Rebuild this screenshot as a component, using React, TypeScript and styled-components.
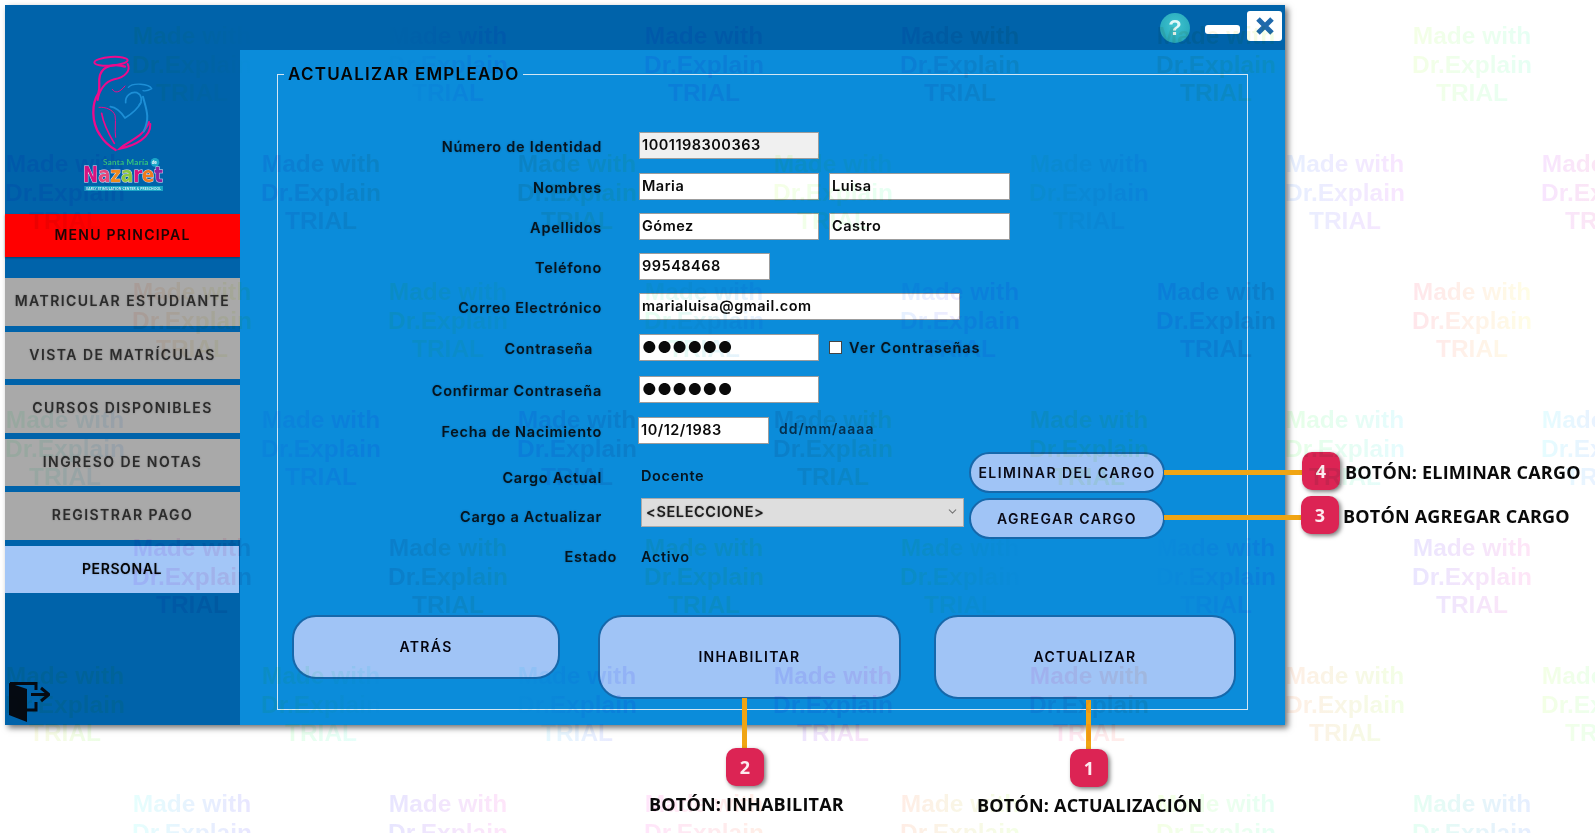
import React from 'react';
import styled, { createGlobalStyle } from 'styled-components';
import { ChevronDown } from 'lucide-react';

const GlobalStyle = createGlobalStyle`
  html, body {
    margin: 0;
    padding: 0;
    background: #fff;
  }
`;

const UI_FONT = `Inter, "Noto Sans", sans-serif`;

const Page = styled.div`
  position: relative;
  width: 1595px;
  height: 833px;
  padding: 5px 0 0 5px;
  box-sizing: border-box;
  overflow: hidden;
  font-family: ${UI_FONT};
  color: #0a0a0a;
`;

const Window = styled.div`
  width: 1280px;
  height: 720px;
  display: flex;
  flex-direction: column;
  background: #0063aa;
  box-shadow: 3px 3px 6px rgba(0, 0, 0, 0.55);
`;

const TitleBar = styled.div`
  height: 45px;
  flex: none;
  display: flex;
  align-items: flex-start;
  justify-content: flex-end;
  padding: 6px 3px 0 0;
  box-sizing: border-box;
`;

const HelpIcon = styled.div`
  width: 30px;
  height: 30px;
  margin-top: 2px;
  border-radius: 50%;
  background: radial-gradient(circle at 50% 40%, #3fc4cf, #1f9fb4);
  color: #dff8f8;
  font: 700 22px/30px "Liberation Sans", sans-serif;
  text-align: center;
`;

const MinimizeIcon = styled.div`
  width: 35px;
  height: 9px;
  margin: 14px 7px 0 15px;
  border-radius: 3px;
  background: #fff;
`;

const CloseIcon = styled.div`
  width: 35px;
  height: 30px;
  border-radius: 3px;
  background: #fff;
  display: flex;
  align-items: center;
  justify-content: center;
`;

const Body = styled.div`
  flex: 1;
  display: flex;
  min-height: 0;
`;

const Sidebar = styled.aside`
  width: 235px;
  flex: none;
  display: flex;
  flex-direction: column;
`;

const LogoBox = styled.div`
  height: 164px;
  flex: none;
  padding-left: 70px;
`;

const MainMenu = styled.div`
  height: 43px;
  flex: none;
  display: flex;
  align-items: center;
  justify-content: center;
  padding-bottom: 2px;
  box-sizing: border-box;
  background: #ff0000;
  box-shadow: 0 1px 2px rgba(0, 0, 0, 0.35);
  font-size: 14px;
  font-weight: 600;
  letter-spacing: 1.25px;
  color: #1d0505;
`;

const NavList = styled.nav`
  display: flex;
  flex-direction: column;
  gap: 6px;
  margin-top: 21px;
`;

const NavItem = styled.div<{ $active?: boolean }>`
  height: 47.5px;
  display: flex;
  align-items: center;
  justify-content: center;
  padding-bottom: 2px;
  box-sizing: border-box;
  background: ${(p) => (p.$active ? '#a3c6f7' : '#a9a9a9')};
  width: ${(p) => (p.$active ? '234px' : '235px')};
  color: ${(p) => (p.$active ? '#050505' : '#2c2c2c')};
  font-size: 14px;
  font-weight: 600;
  letter-spacing: ${(p) => (p.$active ? '0.6px' : '1.45px')};
  text-shadow: 0 0 2px rgba(0, 0, 0, 0.25);
`;

const ExitButton = styled.div`
  margin: auto 0 3px 3px;
  width: 42px;
  height: 40px;
`;

const Panel = styled.main`
  flex: 1;
  background: #0b8cda;
  padding: 13px 37px 15px 37px;
  display: flex;
`;

const GroupBox = styled.fieldset`
  flex: 1;
  min-width: 0;
  margin: 0;
  padding: 0;
  border: 1px solid #d3e6f3;
`;

const GroupTitle = styled.legend`
  margin-left: 6px;
  padding: 0 4px;
  font-size: 17px;
  line-height: 22px;
  font-weight: 600;
  letter-spacing: 1.25px;
  color: #050505;
`;

const FormArea = styled.div`
  display: flex;
  flex-direction: column;
  padding-top: 47px;
`;

const FormRow = styled.div<{ $gap: number; $height: number }>`
  display: grid;
  grid-template-columns: 339px 526px;
  column-gap: 22px;
  height: ${(p) => p.$height}px;
  margin-top: ${(p) => p.$gap}px;
  align-items: center;
`;

const FieldLabel = styled.label<{ $inset?: number; $drop?: number }>`
  justify-self: end;
  margin-right: ${(p) => p.$inset ?? 15}px;
  margin-top: ${(p) => p.$drop ?? 2}px;
  font-size: 14.5px;
  font-weight: 600;
  letter-spacing: 0.72px;
  white-space: nowrap;
  color: #06141f;
  text-shadow: 0 0 2px rgba(0, 0, 0, 0.25);
`;

const Fields = styled.div<{ $start?: boolean }>`
  display: flex;
  gap: ${(p) => (p.$start ? '5px' : '10px')};
  align-items: ${(p) => (p.$start ? 'flex-start' : 'center')};
  height: 100%;
`;

const TextInput = styled.input<{ $w: number; $disabled?: boolean; $dots?: boolean; $nudge?: number }>`
  width: ${(p) => p.$w}px;
  height: 27px;
  margin-left: ${(p) => p.$nudge ?? 0}px;
  box-sizing: border-box;
  border: 1px solid #9c9c9c;
  padding: 0 2px 2px;
  background: ${(p) => (p.$disabled ? '#f0f0f0' : '#fff')};
  font-family: ${UI_FONT};
  font-size: ${(p) => (p.$dots ? '16px' : '14.5px')};
  font-weight: 600;
  letter-spacing: 0.5px;
  color: #0a0a0a;
  outline: none;
`;

const ShowPassword = styled.label`
  display: flex;
  align-items: center;
  gap: 7px;
  font-size: 14.5px;
  font-weight: 600;
  letter-spacing: 0.98px;
  color: #06141f;
  text-shadow: 0 0 2px rgba(0, 0, 0, 0.25);
`;

const CheckBox = styled.input`
  appearance: none;
  width: 13px;
  height: 13px;
  margin: 0;
  background: #fff;
  border: 1px solid #444;
`;

const Hint = styled.span`
  margin: -4px 0 0 0;
  font-size: 14px;
  font-weight: 600;
  letter-spacing: 1px;
  color: #05304f;
`;

const StaticValue = styled.span<{ $drop?: number }>`
  padding-top: ${(p) => p.$drop ?? 1}px;
  margin-left: 2px;
  font-size: 14.5px;
  font-weight: 600;
  letter-spacing: 0.65px;
  color: #06141f;
`;

const FakeSelect = styled.div`
  width: 323px;
  height: 29px;
  margin-left: 2px;
  flex: none;
  box-sizing: border-box;
  display: flex;
  align-items: center;
  justify-content: space-between;
  padding: 0 4px 2px 4px;
  background: #dedede;
  border: 1px solid #aaa;
  font-size: 14.5px;
  font-weight: 600;
  letter-spacing: 0.62px;
  color: #1d1d1d;
  text-shadow: 0 0 2px rgba(0, 0, 0, 0.3);
`;

const PillButton = styled.button`
  width: 196px;
  height: 41px;
  margin-left: auto;
  flex: none;
  border: 2px solid #1668ab;
  border-radius: 21px;
  background: #a0c4f6;
  font-family: ${UI_FONT};
  font-size: 14px;
  font-weight: 600;
  letter-spacing: 1.45px;
  color: #0a0a16;
  padding: 0 0 1px;
`;

const BottomActions = styled.div`
  display: flex;
  align-items: flex-start;
  padding-left: 14px;
  margin-top: 46px;
`;

const ActionButton = styled.button<{ $w: number; $h: number; $offset?: number }>`
  width: ${(p) => p.$w}px;
  height: ${(p) => p.$h}px;
  margin-left: ${(p) => p.$offset ?? 0}px;
  flex: none;
  border: 2px solid #1668ab;
  border-radius: 24px;
  background: #a0c4f6;
  font-family: ${UI_FONT};
  font-size: 14px;
  font-weight: 600;
  letter-spacing: 1.35px;
  color: #050510;
  padding: 0 0 2px;
`;

/* Dr.Explain annotations and trial stamp sit on top of the captured window */
const Connector = styled.div<{ $x: number; $y: number; $w: number; $h: number }>`
  position: absolute;
  left: ${(p) => p.$x}px;
  top: ${(p) => p.$y}px;
  width: ${(p) => p.$w}px;
  height: ${(p) => p.$h}px;
  background: #f0a514;
`;

const Badge = styled.div<{ $x: number; $y: number }>`
  position: absolute;
  left: ${(p) => p.$x}px;
  top: ${(p) => p.$y}px;
  width: 38px;
  height: 38px;
  border-radius: 10px;
  background: #dc2454;
  box-shadow: 2px 2px 4px rgba(0, 0, 0, 0.5);
  color: #fdeaf0;
  font: 700 18px/38px "Open Sans", sans-serif;
  text-align: center;
`;

const CalloutText = styled.div<{ $x: number; $y: number }>`
  position: absolute;
  left: ${(p) => p.$x}px;
  top: ${(p) => p.$y}px;
  font: 700 18px/24px "Open Sans", sans-serif;
  letter-spacing: 0.2px;
  white-space: nowrap;
  color: #0a0a0a;
`;

const Stamp = styled.div<{ $x: number; $y: number; $hue: number }>`
  position: absolute;
  left: ${(p) => p.$x}px;
  top: ${(p) => p.$y}px;
  width: 122px;
  text-align: center;
  font: 700 24.5px/28.5px "Liberation Sans", Arial, sans-serif;
  white-space: nowrap;
  pointer-events: none;
  mix-blend-mode: multiply;
  color: transparent;
  background: linear-gradient(
    90deg,
    hsl(${(p) => p.$hue} 100% 95%),
    hsl(${(p) => p.$hue + 70} 100% 95%)
  );
  background-clip: text;
  -webkit-background-clip: text;
`;

const CALLOUTS = [
  { n: 1, x: 1070, y: 749, text: 'BOTÓN: ACTUALIZACIÓN', tx: 977, ty: 793 },
  { n: 2, x: 726, y: 748, text: 'BOTÓN: INHABILITAR', tx: 649, ty: 792 },
  { n: 3, x: 1301, y: 496, text: 'BOTÓN AGREGAR CARGO', tx: 1343, ty: 504 },
  { n: 4, x: 1302, y: 452, text: 'BOTÓN: ELIMINAR CARGO', tx: 1345, ty: 460 },
];

const LINES = [
  { x: 1086, y: 700, w: 5, h: 50 },
  { x: 742, y: 698, w: 5, h: 50 },
  { x: 1164, y: 515, w: 138, h: 5 },
  { x: 1164, y: 470, w: 139, h: 5 },
];

function buildStamps() {
  const stamps: { x: number; y: number; hue: number }[] = [];
  for (let row = 0; row < 7; row++) {
    const odd = row % 2 === 0;
    for (let col = 0; col < 7; col++) {
      const x = (odd ? 131 : 4) + col * 256;
      const y = 22 + row * 128;
      if (x < 1595) stamps.push({ x, y, hue: (col * 67 + row * 131 + 110) % 360 });
    }
  }
  return stamps;
}

function Logo() {
  return (
    <svg width="100" height="150" viewBox="0 0 300 450">
      <g fill="none" stroke="#ee0a8c" strokeLinecap="round">
        <ellipse cx="108" cy="34" rx="50" ry="13" strokeWidth="6" transform="rotate(-4 108 34)" />
        <path d="M150 50C120 40 85 45 75 75C68 100 78 110 70 130C50 160 48 215 75 255C90 280 105 290 122 300" strokeWidth="7" />
        <path d="M158 42C168 62 150 82 118 88C90 95 72 120 68 150" strokeWidth="6" />
        <path d="M112 118C120 130 132 130 150 108" strokeWidth="3" />
        <path d="M72 172C92 170 115 180 120 196C124 215 118 240 122 262" strokeWidth="3" />
        <path d="M80 190C85 220 100 250 118 280" strokeWidth="5" />
        <path d="M226 222C228 262 182 286 134 296C160 272 205 264 222 216" strokeWidth="6" />
      </g>
      <g fill="none" stroke="#1d8fd6" strokeLinecap="round">
        <path d="M160 112C172 98 222 100 230 116C220 122 212 124 204 122" strokeWidth="4" />
        <path d="M152 158C150 138 168 124 186 128C200 134 204 152 192 166" strokeWidth="5" />
        <path d="M106 170C122 172 138 186 150 204C170 192 186 180 198 158" strokeWidth="5" />
        <path d="M204 140C214 178 226 204 206 244" strokeWidth="6" />
      </g>
      <text x="84" y="344" fontFamily="Lato, sans-serif" fontSize="24" fontWeight="700" fill="#35c77c" textLength="136">
        Santa María
      </text>
      <circle cx="240" cy="337" r="13" fill="#1aa6c9" />
      <text x="230" y="342" fontFamily="Lato, sans-serif" fontSize="14" fontWeight="700" fill="#fff">
        de
      </text>
      <text
        x="24"
        y="397"
        fontFamily="'DejaVu Sans', sans-serif"
        fontSize="66"
        fontWeight="700"
        textLength="240"
        lengthAdjust="spacingAndGlyphs"
        stroke="#e9dff0"
        strokeWidth="3"
        paintOrder="stroke"
      >
        <tspan fill="#d9127f">N</tspan>
        <tspan fill="#e5487d">a</tspan>
        <tspan fill="#ef8a1d">z</tspan>
        <tspan fill="#8cc63f">a</tspan>
        <tspan fill="#d9127f">r</tspan>
        <tspan fill="#ef7a1d">e</tspan>
        <tspan fill="#8e24a0">t</tspan>
      </text>
      <rect x="28" y="408" width="236" height="15" fill="#19a4c4" />
      <text x="34" y="419" fontFamily="Lato, sans-serif" fontSize="10" fontWeight="700" fill="#d8f4f8" textLength="224">
        EARLY STIMULATION CENTER &amp; PRESCHOOL
      </text>
    </svg>
  );
}

function ExitIcon() {
  return (
    <svg width="42" height="40" viewBox="0 0 42 40">
      <polygon points="1,1 19,7 19,40 1,33" fill="#050a12" />
      <path d="M2 1.5H28V8M28 20V28H19" fill="none" stroke="#050a12" strokeWidth="3" />
      <path d="M23 12.5H39M33 6L41 12.5L33 19" fill="none" stroke="#050a12" strokeWidth="3" />
    </svg>
  );
}

const NAV_ITEMS = ['MATRICULAR ESTUDIANTE', 'VISTA DE MATRÍCULAS', 'CURSOS DISPONIBLES', 'INGRESO DE NOTAS', 'REGISTRAR PAGO'];

export default function App() {
  return (
    <Page>
      <GlobalStyle />
      <Window>
        <TitleBar>
          <HelpIcon>?</HelpIcon>
          <MinimizeIcon />
          <CloseIcon>
            <svg width="20" height="20" viewBox="0 0 20 20">
              <path d="M3 3L17 17M17 3L3 17" stroke="#1f69ac" strokeWidth="5" />
            </svg>
          </CloseIcon>
        </TitleBar>
        <Body>
          <Sidebar>
            <LogoBox>
              <Logo />
            </LogoBox>
            <MainMenu>MENU PRINCIPAL</MainMenu>
            <NavList>
              {NAV_ITEMS.map((item) => (
                <NavItem key={item}>{item}</NavItem>
              ))}
              <NavItem $active>PERSONAL</NavItem>
            </NavList>
            <ExitButton>
              <ExitIcon />
            </ExitButton>
          </Sidebar>
          <Panel>
            <GroupBox>
              <GroupTitle>ACTUALIZAR EMPLEADO</GroupTitle>
              <FormArea>
                <FormRow $gap={0} $height={27}>
                  <FieldLabel>Número de Identidad</FieldLabel>
                  <Fields>
                    <TextInput $w={180} $disabled readOnly value="1001198300363" />
                  </Fields>
                </FormRow>
                <FormRow $gap={14} $height={27}>
                  <FieldLabel>Nombres</FieldLabel>
                  <Fields>
                    <TextInput $w={180} readOnly value="Maria" />
                    <TextInput $w={181} readOnly value="Luisa" />
                  </Fields>
                </FormRow>
                <FormRow $gap={13} $height={27}>
                  <FieldLabel>Apellidos</FieldLabel>
                  <Fields>
                    <TextInput $w={180} readOnly value="Gómez" />
                    <TextInput $w={181} readOnly value="Castro" />
                  </Fields>
                </FormRow>
                <FormRow $gap={13} $height={27}>
                  <FieldLabel>Teléfono</FieldLabel>
                  <Fields>
                    <TextInput $w={131} readOnly value="99548468" />
                  </Fields>
                </FormRow>
                <FormRow $gap={13} $height={27}>
                  <FieldLabel>Correo Electrónico</FieldLabel>
                  <Fields>
                    <TextInput $w={321} readOnly value="marialuisa@gmail.com" />
                  </Fields>
                </FormRow>
                <FormRow $gap={14} $height={27}>
                  <FieldLabel $inset={24}>Contraseña</FieldLabel>
                  <Fields>
                    <TextInput $w={180} $dots readOnly value="●●●●●●" />
                    <ShowPassword>
                      <CheckBox type="checkbox" />
                      Ver Contraseñas
                    </ShowPassword>
                  </Fields>
                </FormRow>
                <FormRow $gap={15} $height={27}>
                  <FieldLabel>Confirmar Contraseña</FieldLabel>
                  <Fields>
                    <TextInput $w={180} $dots readOnly value="●●●●●●" />
                  </Fields>
                </FormRow>
                <FormRow $gap={14} $height={27}>
                  <FieldLabel>Fecha de Nacimiento</FieldLabel>
                  <Fields>
                    <TextInput $w={131} $nudge={-1} readOnly value="10/12/1983" />
                    <Hint>dd/mm/aaaa</Hint>
                  </Fields>
                </FormRow>
                <FormRow $gap={8} $height={41}>
                  <FieldLabel $drop={9}>Cargo Actual</FieldLabel>
                  <Fields>
                    <StaticValue $drop={5}>Docente</StaticValue>
                    <PillButton>ELIMINAR DEL CARGO</PillButton>
                  </Fields>
                </FormRow>
                <FormRow $gap={5} $height={41}>
                  <FieldLabel $drop={-4}>Cargo a Actualizar</FieldLabel>
                  <Fields $start>
                    <FakeSelect>
                      {'<SELECCIONE>'}
                      <ChevronDown size={13} color="#777" />
                    </FakeSelect>
                    <PillButton>AGREGAR CARGO</PillButton>
                  </Fields>
                </FormRow>
                <FormRow $gap={4} $height={26}>
                  <FieldLabel $inset={0} $drop={0}>
                    Estado
                  </FieldLabel>
                  <Fields>
                    <StaticValue>Activo</StaticValue>
                  </Fields>
                </FormRow>
                <BottomActions>
                  <ActionButton $w={268} $h={64}>
                    ATRÁS
                  </ActionButton>
                  <ActionButton $w={303} $h={84} $offset={38}>
                    INHABILITAR
                  </ActionButton>
                  <ActionButton $w={302} $h={84} $offset={33}>
                    ACTUALIZAR
                  </ActionButton>
                </BottomActions>
              </FormArea>
            </GroupBox>
          </Panel>
        </Body>
      </Window>

      {LINES.map((l) => (
        <Connector key={`${l.x}-${l.y}`} $x={l.x} $y={l.y} $w={l.w} $h={l.h} />
      ))}
      {CALLOUTS.map((c) => (
        <React.Fragment key={c.n}>
          <Badge $x={c.x} $y={c.y}>
            {c.n}
          </Badge>
          <CalloutText $x={c.tx} $y={c.ty}>
            {c.text}
          </CalloutText>
        </React.Fragment>
      ))}
      {buildStamps().map((s) => (
        <Stamp key={`${s.x}-${s.y}`} $x={s.x} $y={s.y} $hue={s.hue}>
          Made with
          <br />
          Dr.Explain
          <br />
          TRIAL
        </Stamp>
      ))}
    </Page>
  );
}
